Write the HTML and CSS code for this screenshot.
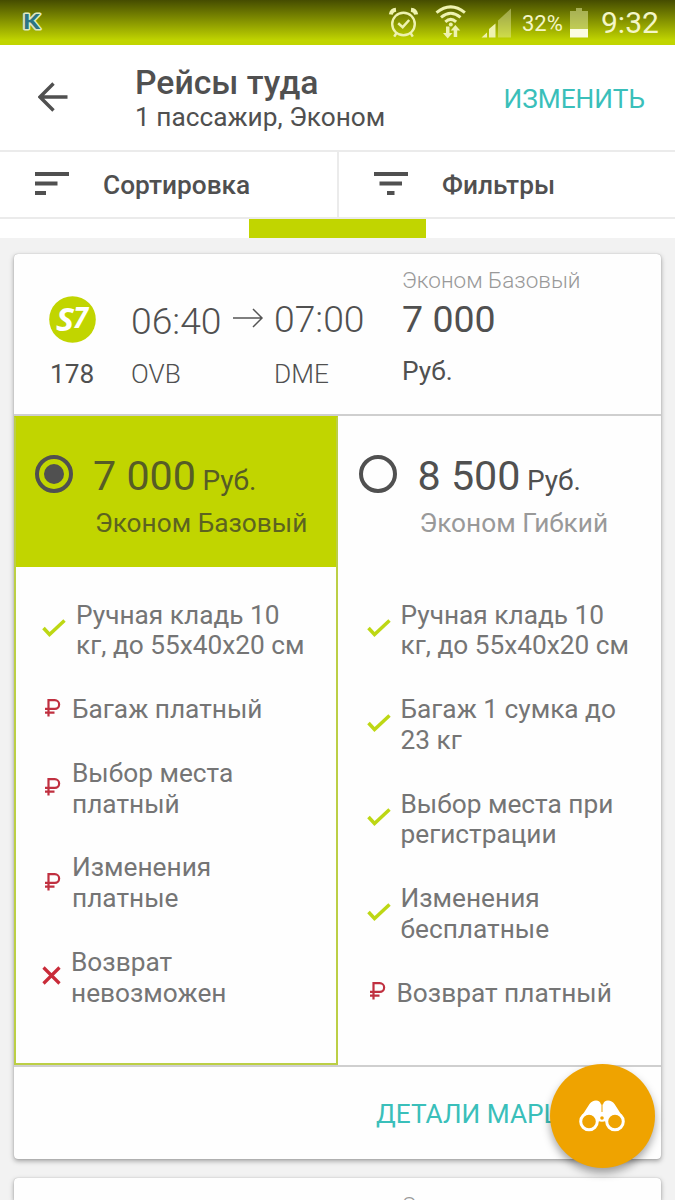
FILE: index.html
```html
<!DOCTYPE html>
<html lang="ru">
<head>
    <meta charset="UTF-8">
    <meta name="viewport" content="width=device-width, initial-scale=1.0">
    <title>Рейсы туда</title>
    <link rel="stylesheet" href="styles.css">
</head>
<body>
    <!-- icons used several times -->
    <svg class="sprite">
        <symbol id="check" viewBox="0 0 24 18"><path d="M1.5 9l6 6.5L22.5 1.5" fill="none" stroke="#bdd714" stroke-width="3.5"/></symbol>
        <symbol id="ruble" viewBox="0 0 17 18"><path d="M4.5 17.5V1.2h6.3a4.3 4.3 0 0 1 0 8.7H1M1 13.6h9.5" fill="none" stroke="#c03040" stroke-width="2.2"/></symbol>
        <symbol id="cross" viewBox="0 0 19 19"><path d="M1.5 1.5l16 16M17.5 1.5l-16 16" fill="none" stroke="#c92b39" stroke-width="3.2"/></symbol>
    </svg>

    <div class="status">
        <svg class="k-logo" width="24" height="22" viewBox="0 0 24 22"><text x="2" y="18" textLength="17" lengthAdjust="spacingAndGlyphs">K</text></svg>
        <div class="status-icons">
            <svg width="150" height="45" viewBox="380 0 150 45">
                <g fill="none" stroke="#eef2b0" stroke-width="2.4">
                    <circle cx="403.5" cy="24" r="11.3"/>
                    <path d="M398.2 23.2l4.5 4 6.5-7.2" stroke-width="2.5"/>
                    <path d="M390.8 14.5q.8-4.3 5.2-4.7M416.2 14.5q-.8-4.3-5.2-4.7" stroke-width="4"/>
                    <path d="M396.5 33l-2.3 3.6M410.5 33l2.3 3.6"/>
                    <path d="M436.5 12.6q14.2-11.5 28.4 0M441 17.3q9.8-8.2 19.5 0M445.3 21.8q5.4-4.8 10.8 0" stroke-width="3"/>
                </g>
                <g fill="#eef2b0">
                    <circle cx="450.8" cy="24.4" r="2"/>
                    <path d="M446 26.5h3.5V33h3l-4.8 5.5-4.7-5.5h3zM453.7 37h3.5v-6.5h3L455.4 25l-4.7 5.5h3z"/>
                    <path d="M481.5 37.5l5.5-5v5zM489 37.5v-8.5l6.5-5.5v14z"/>
                    <path d="M498 37.5V20.5L511 8.5v29z" opacity=".42"/>
                </g>
            </svg>
            <span class="percent">32%</span>
            <svg class="battery" width="18" height="30" viewBox="0 0 18 30"><path d="M0 3h6V0h6v3h6v18H0z" fill="#dfe69a" opacity=".55"/><path d="M0 21h18v8.5H0z" fill="#fbfce4"/></svg>
            <span class="clock">9:32</span>
        </div>
    </div>

    <header class="header">
        <svg class="back" width="30" height="30" viewBox="0 0 30 30"><path d="M15.5 1.5L2 15l13.500 13.5M2 15h27.5" fill="none" stroke="#505050" stroke-width="3.4"/></svg>
        <div class="titles">
            <h1>Рейсы туда</h1>
            <p>1 пассажир, Эконом</p>
        </div>
        <a class="edit">ИЗМЕНИТЬ</a>
    </header>

    <nav class="tools">
        <div class="tool">
            <svg width="34" height="24" viewBox="0 0 34 24"><path d="M0 0h34v4H0zM0 9.5h22.500v4H0zM0 19h11v4H0z" fill="#505050"/></svg>
            <span>Сортировка</span>
        </div>
        <div class="tool">
            <svg width="34" height="24" viewBox="0 0 34 24"><path d="M0 0h34v4H0zM5.5 9.5h22.5v4H5.5zM13 19h7.5v4H13z" fill="#505050"/></svg>
            <span>Фильтры</span>
        </div>
    </nav>
    <div class="tabs"><div class="tab-active"></div></div>

    <main class="content">
        <section class="card">
            <div class="flight">
                <div class="airline">
                    <svg width="47" height="47" viewBox="0 0 47 47">
                        <circle cx="23.5" cy="23.5" r="23.3" fill="#c1d500"/>
                        <text class="s7" x="7" y="35" textLength="18" lengthAdjust="spacingAndGlyphs" font-size="32">S</text>
                        <text class="s7" x="24" y="32" textLength="15" lengthAdjust="spacingAndGlyphs" font-size="28">7</text>
                    </svg>
                    <span>178</span>
                </div>
                <div class="depart"><span class="time">06:40</span><span class="code">OVB</span></div>
                <svg class="arrow" width="32" height="20" viewBox="0 0 32 20"><path d="M1 10h29M21 1l9 9-9 9" fill="none" stroke="#555" stroke-width="1.5"/></svg>
                <div class="arrive"><span class="time">07:00</span><span class="code">DME</span></div>
                <div class="price">
                    <span class="tariff">Эконом Базовый</span>
                    <span class="sum">7 000</span>
                    <span class="cur">Руб.</span>
                </div>
            </div>

            <div class="fares">
                <div class="fare selected">
                    <div class="fare-head">
                        <span class="radio"></span>
                        <div>
                            <div class="cost"><b>7 000</b> <i>Руб.</i></div>
                            <div class="fare-name">Эконом Базовый</div>
                        </div>
                    </div>
                    <ul>
                        <li class="check"><svg><use href="#check"/></svg><span>Ручная кладь 10<br>кг, до 55x40x20 см</span></li>
                        <li class="ruble"><svg><use href="#ruble"/></svg><span>Багаж платный</span></li>
                        <li class="ruble"><svg><use href="#ruble"/></svg><span>Выбор места<br>платный</span></li>
                        <li class="ruble"><svg><use href="#ruble"/></svg><span>Изменения<br>платные</span></li>
                        <li class="cross"><svg><use href="#cross"/></svg><span>Возврат<br>невозможен</span></li>
                    </ul>
                </div>
                <div class="fare">
                    <div class="fare-head">
                        <span class="radio"></span>
                        <div>
                            <div class="cost"><b>8 500</b> <i>Руб.</i></div>
                            <div class="fare-name">Эконом Гибкий</div>
                        </div>
                    </div>
                    <ul>
                        <li class="check"><svg><use href="#check"/></svg><span>Ручная кладь 10<br>кг, до 55x40x20 см</span></li>
                        <li class="check"><svg><use href="#check"/></svg><span>Багаж 1 сумка до<br>23 кг</span></li>
                        <li class="check"><svg><use href="#check"/></svg><span>Выбор места при<br>регистрации</span></li>
                        <li class="check"><svg><use href="#check"/></svg><span>Изменения<br>бесплатные</span></li>
                        <li class="ruble"><svg><use href="#ruble"/></svg><span>Возврат платный</span></li>
                    </ul>
                </div>
            </div>

            <div class="details"><a>ДЕТАЛИ МАРШ</a></div>
        </section>

        <section class="card next">
            <span class="tariff">Э</span>
        </section>
    </main>

    <button class="fab">
        <svg width="46" height="32" viewBox="0 0 46 32">
            <path d="M1.5 18L10.5 4Q13 .5 17 .5q4 0 5 4h2q1-4 5-4 4 0 6.500 3.500l9 14-6 5-15.500-2-15.500 2z" fill="#fff"/>
            <path d="M23 0v12" stroke="#efa300" stroke-width="1"/>
            <circle cx="10" cy="21.5" r="8.3" fill="#efa300" stroke="#fff" stroke-width="3"/>
            <circle cx="36" cy="21.5" r="8.3" fill="#efa300" stroke="#fff" stroke-width="3"/>
            <circle cx="23" cy="18" r="2.8" fill="#efa300" stroke="#fff" stroke-width="2"/>
        </svg>
    </button>
</body>
</html>
```

FILE: styles.css
```css
* {
    box-sizing: border-box;
}
body {
    margin: 0;
    height: 1200px;
    overflow: hidden;
    font-family: Roboto, 'Liberation Sans', sans-serif;
    font-size: 26.25px;
    line-height: 30.75px;
    color: #505050;
    background: #f2f2f2;
}
h1, p, ul {
    margin: 0;
    padding: 0;
}
.sprite {
    display: none;
}
svg {
    flex: none;
}

/* status bar */
.status {
    display: flex;
    justify-content: space-between;
    height: 45px;
    padding: 0 17px 0 21px;
    background: linear-gradient(#454c00, #c1d500 90%);
}
.k-logo {
    margin-top: 11px;
    overflow: visible;
}
.k-logo text {
    font: 900 21px Lato, sans-serif;
    fill: #2b7485;
    stroke: #dfe9c0;
    stroke-width: 3px;
    stroke-linejoin: round;
    paint-order: stroke;
}
.status-icons {
    display: flex;
    color: #f4f6c8;
}
.percent {
    width: 40px;
    margin-left: -8px;
    font-size: 22px;
    line-height: 47px;
    white-space: nowrap;
}
.battery {
    margin: 8px 13px 0 8px;
}
.clock {
    font-size: 30px;
    line-height: 46px;
    width: 57px;
}

/* header */
.header {
    display: flex;
    height: 107px;
    padding: 0 30px 0 38px;
    background: #fff;
    border-bottom: 2px solid #ebebeb;
}
.back {
    margin-top: 37px;
}
.titles {
    margin: 18px 0 0 67px;
    flex: 1;
}
.titles h1 {
    font-size: 33.75px;
    font-weight: 500;
    line-height: 40px;
}
.titles p {
    line-height: 29px;
    white-space: nowrap;
}
.edit {
    margin-top: 39px;
    color: #3abfba;
}

/* sort and filters */
.tools {
    display: flex;
    height: 67px;
    background: #fff;
    border-bottom: 2px solid #ebebeb;
}
.tool {
    display: flex;
    align-items: center;
    width: 339px;
    padding: 1px 0 0 35px;
    font-weight: 500;
    border-right: 2px solid #ebebeb;
}
.tool svg {
    margin: -2px 34px 0 0;
}
.tool + .tool {
    width: 336px;
    border: 0;
}
.tabs {
    height: 19px;
    padding-left: 249px;
    background: #fff;
}
.tab-active {
    width: 177px;
    height: 19px;
    background: #c1d500;
}

/* cards */
.content {
    padding: 16px 14px 0;
}
.card {
    height: 905px;
    background: #fefefe;
    border-radius: 4px;
    box-shadow: 0 2px 5px rgba(0, 0, 0, 0.35), 0 0 1px rgba(0, 0, 0, 0.3);
}
.card.next {
    height: 22px;
    margin-top: 19px;
    padding: 11px 0 0 388px;
    border-radius: 4px 4px 0 0;
    overflow: hidden;
}
.flight {
    display: flex;
    height: 162px;
    padding-left: 35px;
    border-bottom: 2px solid #cfcfcf;
}
.flight > div {
    display: flex;
    flex-direction: column;
}
.airline {
    width: 82px;
    padding-top: 42px;
}
.airline span {
    margin-top: 16px;
    padding-left: 1px;
}
.s7 {
    font-family: 'Open Sans', sans-serif;
    font-weight: 700;
    font-style: italic;
    fill: #fff;
}
.depart {
    width: 101px;
    padding-top: 45px;
}
.arrow {
    margin: 54px 10px 0 0;
}
.arrive {
    width: 128px;
    padding-top: 43px;
}
.time {
    font-size: 37.25px;
    line-height: 44px;
    font-weight: 300;
}
.code {
    margin-top: 16px;
    font-weight: 300;
}
.arrive .code {
    margin-top: 18px;
}
.price {
    padding-top: 13px;
}
.tariff {
    font-size: 22.5px;
    line-height: 27px;
    font-weight: 300;
    color: #999;
}
.sum {
    margin-top: 3px;
    font-size: 37.5px;
    line-height: 44px;
}
.cur {
    margin-top: 15px;
}

/* fares */
.fares {
    display: flex;
    height: 651px;
    border-bottom: 2px solid #cfcfcf;
}
.fare {
    width: 324px;
}
.fare-head {
    display: flex;
    height: 152px;
    padding: 38px 0 0 21px;
}
.selected .fare-head {
    background: #c1d500;
    height: 149px;
    padding: 36px 0 0 19px;
    color: #565c26;
}
.selected {
    border: 2px solid #bccf45;
    border-top-color: #c1d500;
}
.radio {
    flex: none;
    width: 38px;
    height: 38px;
    margin: 1px 21px 0 0;
    border: 4px solid #505050;
    border-radius: 50%;
}
.selected .radio {
    margin-right: 20px;
    padding: 5px;
    background: #505050 content-box;
    background-clip: content-box;
}
.cost {
    height: 44px;
    line-height: 44px;
    white-space: nowrap;
}
.cost b {
    font-size: 41.25px;
    font-weight: 400;
}
.cost i {
    font-size: 28px;
    font-style: normal;
}
.fare-name {
    padding: 10px 0 0 2px;
    color: #999;
}
.selected .fare-name {
    color: #5c6320;
}
ul {
    list-style: none;
    padding: 31.5px 0 0 29px;
    color: #757575;
}
.selected ul {
    padding: 32.5px 0 0 26px;
}
li {
    display: flex;
    align-items: center;
    margin-bottom: 33px;
    white-space: nowrap;
}
li svg {
    width: 24px;
    height: 18px;
    margin: -4px 10px 0 0;
}
.ruble svg {
    width: 17px;
    margin: -3px 11px 0 2px;
}
.cross svg {
    width: 19px;
    height: 19px;
}
.details {
    padding: 32px 0 0 362px;
    color: #3abfba;
    white-space: nowrap;
}

/* search button */
.fab {
    position: absolute;
    left: 550px;
    top: 1064px;
    display: flex;
    align-items: center;
    justify-content: center;
    width: 105px;
    height: 104px;
    padding: 0 2px 0 0;
    border: 0;
    border-radius: 50%;
    background: #efa300;
    box-shadow: 0 5px 9px rgba(0, 0, 0, 0.35);
}
```
